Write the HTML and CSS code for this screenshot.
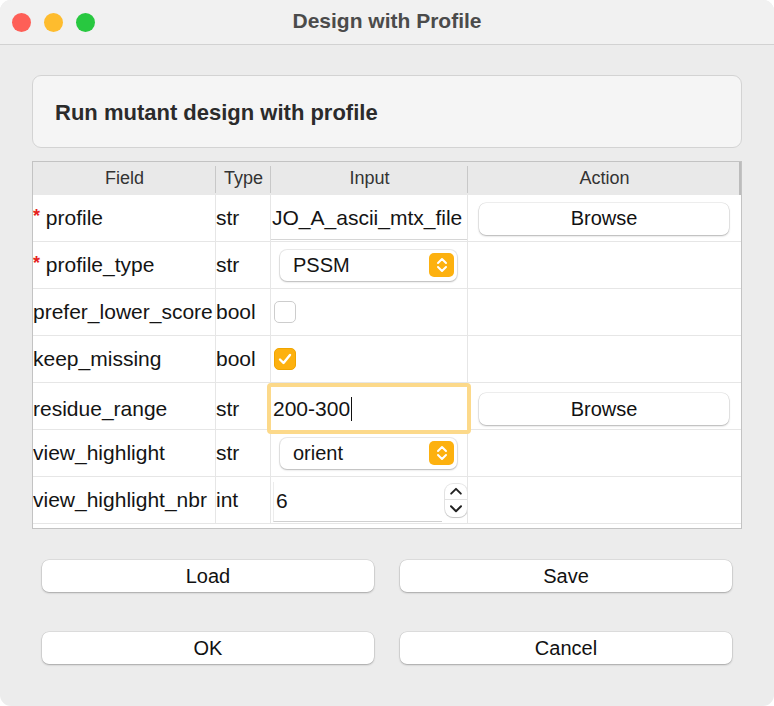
FILE: index.html
```html
<!DOCTYPE html>
<html>
<head>
<meta charset="utf-8">
<link rel="stylesheet" href="styles.css">
</head>
<body>
<div class="window">
  <div class="titlebar">
    <div class="lights">
      <span class="light red"></span>
      <span class="light yellow"></span>
      <span class="light green"></span>
    </div>
    <div class="title">Design with Profile</div>
  </div>
  <div class="content">
    <div class="panel">Run mutant design with profile</div>
    <div class="table">
      <div class="row head">
        <div class="cell hc">Field</div>
        <div class="cell hc">Type</div>
        <div class="cell hc">Input</div>
        <div class="cell hc last">Action</div>
        <div class="scrollmark"></div>
      </div>
      <div class="row">
        <div class="cell"><span class="req">*</span>&nbsp;profile</div>
        <div class="cell">str</div>
        <div class="cell input-cell"><div class="textfield clip">JO_A_ascii_mtx_file</div></div>
        <div class="cell last"><button class="btn browse">Browse</button></div>
      </div>
      <div class="row">
        <div class="cell"><span class="req">*</span>&nbsp;profile_type</div>
        <div class="cell">str</div>
        <div class="cell"><div class="combo"><span>PSSM</span><span class="stepper">
          <svg width="14" height="18" viewBox="0 0 14 18"><path d="M3 7 L7 3 L11 7 M3 11 L7 15 L11 11" fill="none" stroke="#fff" stroke-width="2" stroke-linecap="round" stroke-linejoin="round"/></svg></span></div></div>
        <div class="cell last"></div>
      </div>
      <div class="row">
        <div class="cell">prefer_lower_score</div>
        <div class="cell">bool</div>
        <div class="cell"><span class="check"></span></div>
        <div class="cell last"></div>
      </div>
      <div class="row">
        <div class="cell">keep_missing</div>
        <div class="cell">bool</div>
        <div class="cell"><span class="check on"><svg width="22" height="22" viewBox="0 0 22 22"><path d="M6 11.5 L9.5 15 L16 7" fill="none" stroke="#fff" stroke-width="2.4" stroke-linecap="round" stroke-linejoin="round"/></svg></span></div>
        <div class="cell last"></div>
      </div>
      <div class="row">
        <div class="cell">residue_range</div>
        <div class="cell">str</div>
        <div class="cell input-cell"><div class="focusring"><div class="textfield focused">200-300<span class="caret"></span></div></div></div>
        <div class="cell last"><button class="btn browse">Browse</button></div>
      </div>
      <div class="row">
        <div class="cell">view_highlight</div>
        <div class="cell">str</div>
        <div class="cell"><div class="combo"><span>orient</span><span class="stepper">
          <svg width="14" height="18" viewBox="0 0 14 18"><path d="M3 7 L7 3 L11 7 M3 11 L7 15 L11 11" fill="none" stroke="#fff" stroke-width="2" stroke-linecap="round" stroke-linejoin="round"/></svg></span></div></div>
        <div class="cell last"></div>
      </div>
      <div class="row">
        <div class="cell">view_highlight_nbr</div>
        <div class="cell">int</div>
        <div class="cell spin-cell"><div class="spinfield">6</div><div class="spinbtns">
          <svg width="22" height="16" viewBox="0 0 22 16"><path d="M6 10 L11 5 L16 10" fill="none" stroke="#222" stroke-width="2" stroke-linecap="round" stroke-linejoin="round"/></svg>
          <svg width="22" height="16" viewBox="0 0 22 16"><path d="M6 6 L11 11 L16 6" fill="none" stroke="#222" stroke-width="2" stroke-linecap="round" stroke-linejoin="round"/></svg>
        </div></div>
        <div class="cell last"></div>
      </div>
    </div>
    <div class="buttons">
      <button class="btn big">Load</button>
      <button class="btn big">Save</button>
      <button class="btn big">OK</button>
      <button class="btn big">Cancel</button>
    </div>
  </div>
</div>
</body>
</html>
```

FILE: styles.css
```css
* { box-sizing: border-box; }
html, body { margin: 0; padding: 0; background: #ffffff; }
body { font-family: "Liberation Sans", Arial, sans-serif; }

.window {
  width: 774px;
  height: 706px;
  background: #ececec;
  border-radius: 11px;
  overflow: hidden;
}

.titlebar {
  height: 45px;
  background: #f1f1f1;
  border-bottom: 1px solid #d2d2d2;
  display: flex;
  align-items: center;
  position: relative;
}
.lights { display: flex; gap: 13px; padding-left: 12px; }
.light { width: 19px; height: 19px; border-radius: 50%; display: block; }
.red { background: #fe5f57; }
.yellow { background: #febc2e; }
.green { background: #28c840; }
.title {
  flex: 1;
  text-align: center;
  font-weight: bold;
  font-size: 21px;
  color: #4b4b4b;
  margin-left: -95px;
  margin-top: -2px;
}

.content { padding: 30px 32px 0 32px; }

.panel {
  height: 73px;
  background: #f5f5f5;
  border: 1px solid #d3d3d3;
  border-radius: 9px;
  font-weight: bold;
  font-size: 22px;
  color: #2b2b2b;
  display: flex;
  align-items: center;
  padding-left: 22px;
  padding-top: 2px;
}

.table {
  margin-top: 13px;
  width: 710px;
  height: 368px;
  border: 1px solid #c3c3c3;
  background: #ffffff;
}
.row {
  display: grid;
  grid-template-columns: 183px 55px 197px 1fr;
  height: 47px;
  border-bottom: 1px solid #e6e6e6;
  position: relative;
}
.row.head {
  height: 33px;
  background: #e9e9e9;
  border-bottom: none;
}
.cell {
  border-right: 1px solid #e6e6e6;
  display: flex;
  align-items: center;
  font-size: 21px;
  color: #141414;
  white-space: nowrap;
  overflow: hidden;
}
.cell.last { border-right: none; }
.hc {
  justify-content: center;
  font-size: 18px;
  color: #333;
  border-right: none;
  position: relative;
}
.head .hc:not(.last)::after {
  content: "";
  position: absolute;
  right: 0;
  top: 4px;
  bottom: 2px;
  width: 1px;
  background: #c8c8c8;
}
.scrollmark {
  position: absolute;
  right: 0;
  top: 0;
  width: 2px;
  height: 33px;
  background: #bcbcbc;
}
.req { color: #e5231d; font-weight: bold; font-size: 18px; margin-top: -4px; }

.input-cell { overflow: visible; }
.textfield {
  background: #fff;
  width: 100%;
  height: 44px;
  display: flex;
  align-items: center;
  font-size: 21px;
  border-bottom: 1px solid #d6d6d6;
}
.clip { padding-left: 1px; }

.focusring {
  flex-shrink: 0;
  margin-left: -4px;
  width: 204px;
  height: 51px;
  border: 4px solid #fcd98a;
  border-radius: 4px;
  position: relative;
  z-index: 1;
}
.textfield.focused {
  height: 43px;
  border-bottom: none;
  padding-left: 2px;
}
.caret {
  display: inline-block;
  width: 1px;
  height: 24px;
  background: #111;
  margin-left: 1px;
}

.combo {
  margin-left: 9px;
  width: 177px;
  height: 31px;
  background: #fff;
  border-radius: 7px;
  box-shadow: 0 0 0 1px rgba(0,0,0,0.08), 0 1px 2px rgba(0,0,0,0.22);
  display: flex;
  align-items: center;
  justify-content: space-between;
  padding-left: 13px;
  padding-right: 3px;
  font-size: 20px;
  color: #141414;
}
.stepper {
  width: 25px;
  height: 24px;
  background: #fdb10f;
  border-radius: 5px;
  display: flex;
  align-items: center;
  justify-content: center;
}

.check {
  margin-left: 3px;
  width: 22px;
  height: 22px;
  border-radius: 5px;
  border: 1px solid #cdcdcd;
  background: #fff;
  display: block;
}
.check.on { background: #fdb10f; border-color: #f0a500; }
.check.on svg { display: block; margin: -1px; }

.spin-cell { gap: 3px; }
.spinfield {
  margin-left: 2px;
  width: 170px;
  height: 40px;
  background: #fff;
  border-left: 1px solid #ececec;
  border-bottom: 1px solid #d0d0d0;
  display: flex;
  align-items: center;
  padding-left: 2px;
  font-size: 21px;
  margin-top: 3px;
}
.spinbtns {
  width: 22px;
  height: 33px;
  border-radius: 8px;
  background: #fff;
  box-shadow: 0 0 0 1px rgba(0,0,0,0.1), 0 1px 1px rgba(0,0,0,0.15);
  display: flex;
  flex-direction: column;
  overflow: hidden;
}
.spinbtns svg { display: block; width: 22px; height: 16.5px; }
.spinbtns svg:first-child { border-bottom: 1px solid #e2e2e2; }

.btn {
  font-family: "Liberation Sans", Arial, sans-serif;
  background: #fff;
  border: none;
  border-radius: 7px;
  box-shadow: 0 0 0 0.5px rgba(0,0,0,0.12), 0 1px 2px rgba(0,0,0,0.25);
  font-size: 20px;
  color: #111;
  height: 32px;
  padding: 0;
}
.browse { margin-left: 11px; width: 250px; margin-top: 1px; }

.buttons {
  margin-top: 31px;
  padding: 0 10px;
  display: grid;
  grid-template-columns: 332px 332px;
  column-gap: 26px;
  row-gap: 40px;
}
```
